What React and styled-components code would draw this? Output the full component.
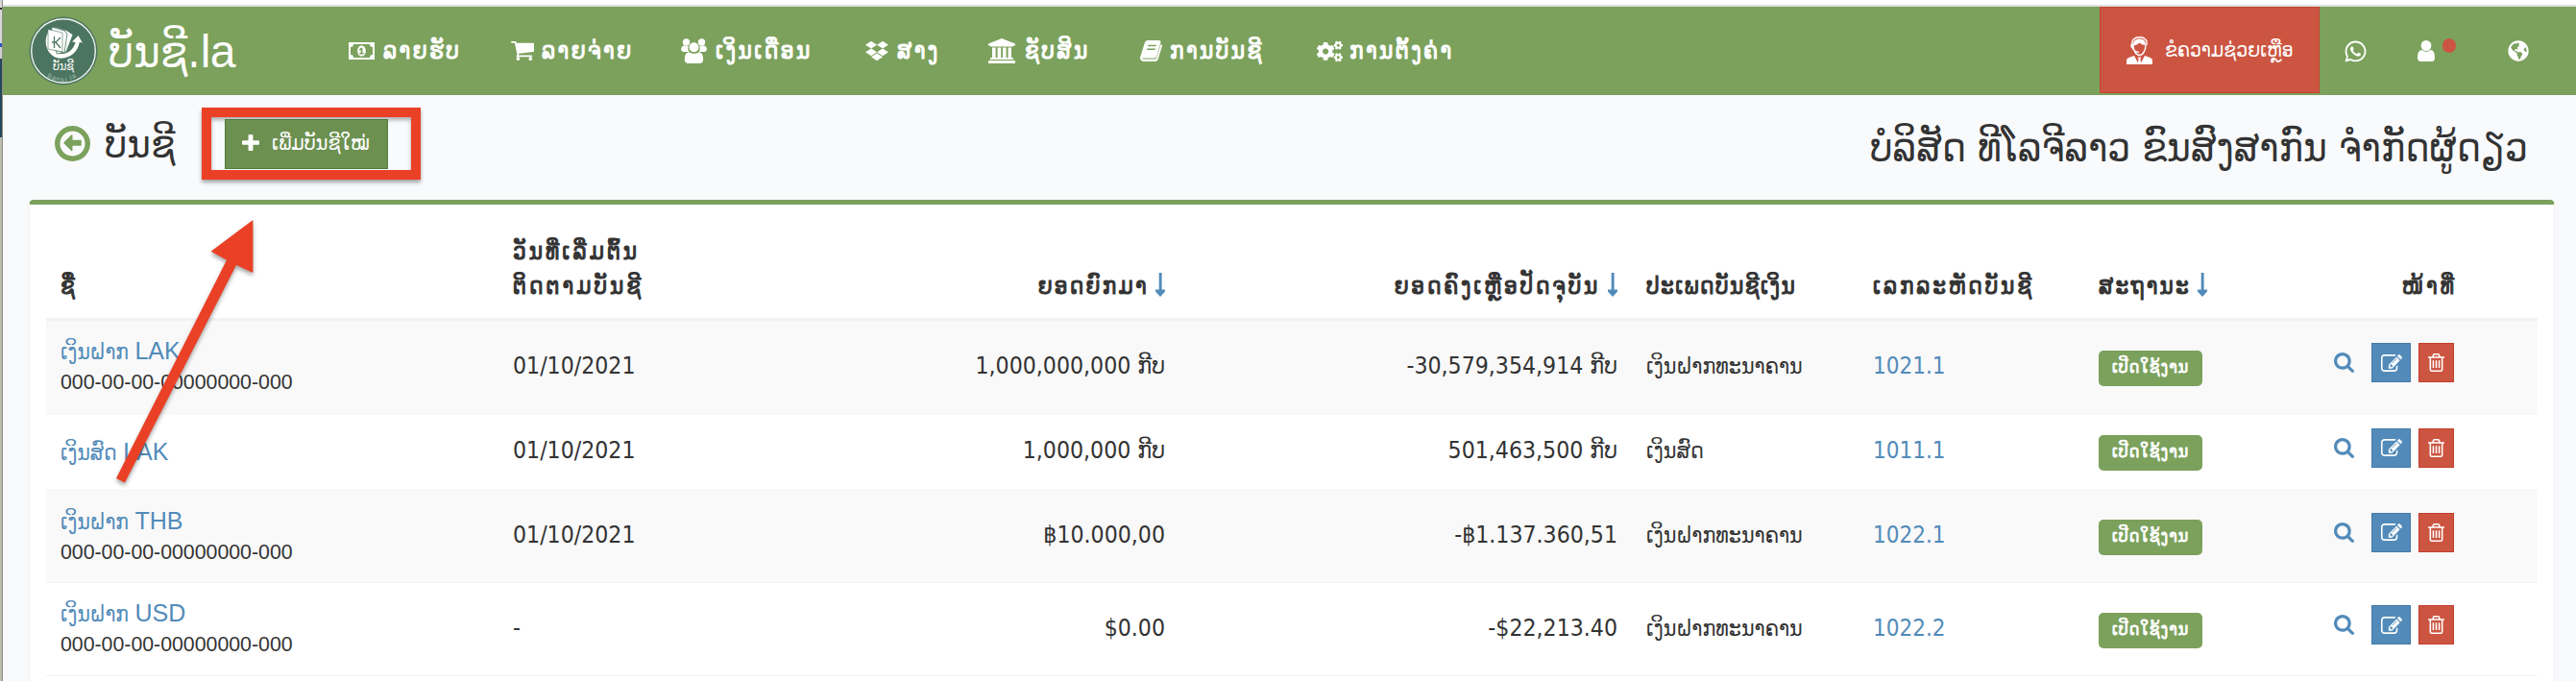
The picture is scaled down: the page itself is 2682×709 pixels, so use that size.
import React from 'react';
import styled, { createGlobalStyle } from 'styled-components';
import { FaDropbox, FaWhatsapp, FaGlobeAmericas, FaCogs } from 'react-icons/fa';

const Svg = ({ w, h, box = '0 0 1792 1792', children }) => (
  <svg width={w} height={h} viewBox={box} fill='currentColor' preserveAspectRatio='none'>
    {children}
  </svg>
);

const MoneyIcon = () => (
  <Svg w={27} h={18} box='0 0 27 18'>
    <path
      fillRule='evenodd'
      d='M0 0h27v18H0zM2 5v8a3 3 0 0 1 3 3h17a3 3 0 0 1 3-3V5a3 3 0 0 1-3-3H5a3 3 0 0 1-3 3zM13.500 3.400c2.900 0 4.300 2.700 4.300 5.600s-1.400 5.600-4.300 5.600-4.300-2.700-4.300-5.600 1.400-5.600 4.300-5.600zM12.800 5.800l-2 1.600.8 1 1-.7v3.400h-1.400v1.300h4.500v-1.300h-1.300V5.800z'
    />
  </Svg>
);

const CartIcon = () => (
  <Svg w={24} h={20} box='64 256 1664 1408'>
    <path d='M704 1536q0 52-38 90t-90 38-90-38-38-90 38-90 90-38 90 38 38 90zm896 0q0 52-38 90t-90 38-90-38-38-90 38-90 90-38 90 38 38 90zm128-1088v512q0 24-16.500 42.500t-40.500 21.500l-1044 122q13 60 13 70 0 16-24 64h920q26 0 45 19t19 45-19 45-45 19h-1024q-26 0-45-19t-19-45q0-11 8-31.500t16-36 21.500-40 15.500-29.500l-177-823h-204q-26 0-45-19t-19-45 19-45 45-19h256q16 0 28.500 6.500t19.500 15.500 13 24.500 8 26 5.500 29.500 4.500 26h1201q26 0 45 19t19 45z' />
  </Svg>
);

const UsersIcon = () => (
  <Svg w={27} h={26} box='0 0 27 26'>
    <circle cx='5.500' cy='4' r='3.700' />
    <circle cx='21.500' cy='4' r='3.700' />
    <path d='M3.500 7.500c1.500 1 3 1 4.300.3-1 2.500-.5 4.600.6 6.200H3C.8 14-.3 12.500.3 10.200.8 8.600 1.800 7.500 3.500 7.500zM23.500 7.500c-1.500 1-3 1-4.300.3 1 2.500.5 4.600-.6 6.200H24c2.200 0 3.300-1.500 2.700-3.800-.5-1.600-1.500-2.700-3.200-2.700z' />
    <circle cx='13.500' cy='9.200' r='5' />
    <path d='M8.500 14.200c3 2.200 7 2.200 10 0 3.500 0 4.700 4 4.700 7.800 0 2.500-1.600 4-3.800 4H7.600c-2.200 0-3.800-1.500-3.800-4 0-3.800 1.200-7.800 4.700-7.800z' />
  </Svg>
);

const BankIcon = () => (
  <Svg w={28} h={26} box='0 0 28 26'>
    <path d='M14 0l14 5.500v2h-2c0 .8-.5 1-1 1H3c-.5 0-1-.3-1-1H0v-2zM4 9.500h3.600v10.600h2V9.500h3.600v10.600h1.800V9.500h3.600v10.600h2V9.500H24v10.600h1c.6 0 1 .4 1 1v.9H2v-.9c0-.6.4-1 1-1h1zM1 23h26c.6 0 1 .4 1 1v2H0v-2c0-.6.400-1 1-1z' />
  </Svg>
);

const BookIcon = () => (
  <Svg w={23} h={22} box='0 0 23 22'>
    <path
      fillRule='evenodd'
      d='M8 0h11.500c1.700 0 2.300 1.200 1.900 2.600L17.300 16.500c-.5 1.500-1.300 2-2.800 2H3.300c-1.300 0-1.500 1 .1 1h12c.9 0 1.500-.4 1.800-1.200L21.600 4c1.100.4 1.500 1.200 1.200 2.300l-4 13.300C18.300 21.200 17 22 15.500 22H4c-2.600 0-4.600-2.400-3.800-4.800L4.500 3.400C5 1.500 6.200 0 8 0zM8.500 4.800L8 6.300h8.600l.5-1.500zM7.400 8.400l-.5 1.500h8.700l.4-1.500z'
    />
  </Svg>
);

const AgentIcon = () => (
  <Svg w={27} h={29} box='0 0 27 29'>
    <path
      fill='none'
      stroke='currentColor'
      strokeWidth='1.400'
      d='M6 9C5 4 8 .8 13.500.8S22 4 21 9M7 9c0 5 2.800 10.500 6.500 10.500S20 14 20 9M6 10.500c.5 3.500 3 5.500 7 6'
    />
    <path d='M7 8.500C7 4.500 9.500 2.500 13.500 2.500S20 4.500 20 9c-3-.2-5-1-6.500-2.500C12 8 10 9 7 9.500zM4.800 7.500h2v5c-1.500 0-2.400-1-2.400-2.500s.1-1.800.4-2.500zM0 29v-4c0-2.600 4-3.800 8-5l4 7.500.6-4.500-1-1.500h3.800l-1 1.500.6 4.500 4-7.500c4 1.200 8 2.400 8 5v4z' />
  </Svg>
);

const UserIcon = () => (
  <Svg w={18} h={22} box='256 128 1280 1536'>
    <path d='M1536 1399q0 109-62.500 187t-150.500 78h-854q-88 0-150.500-78t-62.500-187q0-85 8.500-160.500t31.500-152 58.500-131 94-89 134.500-34.500q131 128 313 128t313-128q76 0 134.500 34.500t94 89 58.500 131 31.500 152 8.500 160.500zm-256-887q0 159-112.500 271.500t-271.500 112.500-271.500-112.500-112.500-271.500 112.500-271.500 271.500-112.500 271.500 112.500 112.500 271.500z' />
  </Svg>
);

const BackIcon = () => (
  <Svg w={37} h={37} box='128 128 1536 1536'>
    <path d='M1280 832v128q0 14-9 23t-23 9h-352v192q0 14-9 23t-23 9q-12 0-24-10l-319-319q-9-9-9-23t9-23l320-320q9-9 23-9 13 0 22.500 9.500t9.500 22.500v192h352q13 0 22.500 9.500t9.500 22.500zm160 64q0-148-73-273t-198-198-273-73-273 73-198 198-73 273 73 273 198 198 273 73 273-73 198-198 73-273zm224 0q0 209-103 385.500t-279.500 279.500-385.500 103-385.500-103-279.500-279.500-103-385.500 103-385.500 279.500-279.500 385.500-103 385.500 103 279.500 279.500 103 385.500z' />
  </Svg>
);

const PlusIcon = () => (
  <Svg w={18} h={17} box='192 128 1408 1408'>
    <path d='M1600 736v192q0 40-28 68t-68 28h-416v416q0 40-28 68t-68 28h-192q-40 0-68-28t-28-68v-416h-416q-40 0-68-28t-28-68v-192q0-40 28-68t68-28h416v-416q0-40 28-68t68-28h192q40 0 68 28t28 68v416h416q40 0 68 28t28 68z' />
  </Svg>
);

const SortIcon = () => (
  <Svg w={10} h={25} box='0 0 10 25'>
    <path d='M3.700 0h2.900v17.500H10v2L5 25l-5-5.500v-2h3.700z' />
  </Svg>
);

const SearchIcon = () => (
  <Svg w={21} h={21} box='64 128 1664 1664'>
    <path d='M1216 832q0-185-131.500-316.500t-316.500-131.500-316.500 131.500-131.500 316.500 131.500 316.500 316.500 131.500 316.500-131.500 131.500-316.500zm512 832q0 52-38 90t-90 38q-54 0-90-38l-343-342q-179 124-399 124-143 0-273.500-55.500t-225-150-150-225-55.500-273.500 55.500-273.500 150-225 225-150 273.500-55.500 273.500 55.500 225 150 150 225 55.500 273.500q0 220-124 399l343 343q37 37 37 90z' />
  </Svg>
);

const EditIcon = () => (
  <Svg w={22} h={18} box='0 128 1792 1408'>
    <path d='M888 1184l116-116-152-152-116 116v56h96v96h56zm440-720q-16-16-33 1l-350 350q-17 17-1 33t33-1l350-350q17-17 1-33zm80 594v190q0 119-84.500 203.500t-203.500 84.500h-832q-119 0-203.500-84.500t-84.500-203.500v-832q0-119 84.500-203.500t203.500-84.500h832q63 0 117 25 15 7 18 23 3 17-9 29l-49 49q-14 14-32 8-23-6-45-6h-832q-66 0-113 47t-47 113v832q0 66 47 113t113 47h832q66 0 113-47t47-113v-126q0-13 9-22l64-64q15-15 35-7t20 29zm-96-738l288 288-672 672h-288v-288zm444 132l-92 92-288-288 92-92q28-28 68-28t68 28l152 152q28 28 28 68t-28 68z' />
  </Svg>
);

const TrashIcon = () => (
  <Svg w={17} h={19} box='192 128 1408 1536'>
    <path d='M704 736v576q0 14-9 23t-23 9h-64q-14 0-23-9t-9-23v-576q0-14 9-23t23-9h64q14 0 23 9t9 23zm256 0v576q0 14-9 23t-23 9h-64q-14 0-23-9t-9-23v-576q0-14 9-23t23-9h64q14 0 23 9t9 23zm256 0v576q0 14-9 23t-23 9h-64q-14 0-23-9t-9-23v-576q0-14 9-23t23-9h64q14 0 23 9t9 23zm128 724v-948h-896v948q0 22 7 40.500t14.500 27 10.500 8.500h832q3 0 10.500-8.500t14.500-27 7-40.500zm-672-1076h448l-48-117q-7-9-17-11h-317q-10 2-17 11zm928 32v64q0 14-9 23t-23 9h-96v948q0 83-47 143.500t-113 60.500h-832q-66 0-113-58.500t-47-141.500v-952h-96q-14 0-23-9t-9-23v-64q0-14 9-23t23-9h309l70-167q15-37 54-63t79-26h320q40 0 79 26t54 63l70 167h309q14 0 23 9t9 23z' />
  </Svg>
);

const Logo = () => (
  <svg width='72' height='72' viewBox='0 0 72 72'>
    <circle cx='36' cy='36' r='35.500' fill='#4b7560' />
    <circle cx='36' cy='36' r='33.300' fill='none' stroke='#eef3ee' strokeWidth='1.400' />
    {/* round arrow behind the notes */}
    <path
      d='M21 15C15 24 17 37 27 42.500 40 47 51 38 52.800 27l3 .6L51.500 20 45 26.500l3.600.5C46.500 35 39 41.500 29 38z'
      fill='#fff'
    />
    <path d='M27 11l13 4 6 4-7 18-10 2z' fill='#fff' stroke='#4b7560' strokeWidth='.8' />
    <path d='M24 11l13 4 3 3-3 20-14-4z' fill='#fff' stroke='#4b7560' strokeWidth='.8' />
    <path d='M20 13.500l15 3.500v20l-15-3z' fill='#fff' stroke='#4b7560' strokeWidth='.6' />
    <path d='M26.500 21v12M24 27h5M33 22l-5 5 5 6' fill='none' stroke='#4b7560' strokeWidth='1.300' />
    <text x='36' y='56' textAnchor='middle' fontFamily='"DejaVu Sans Condensed"' fontSize='12.500' fill='#fff'>
      ບັນຊີ
    </text>
    <text
      x='19 23.500 28 33 38 41 43.500 46'
      y='63 65.500 67 68 68 67.500 66.500 65'
      rotate='30 22 12 4 -4 -10 -18 -26'
      fontFamily='"Liberation Sans"'
      fontSize='7'
      fill='#a9c4b1'
    >
      bansi.la
    </text>
  </svg>
);

const menu = [
  { label: 'ລາຍຮັບ', icon: <MoneyIcon />, width: 169, gap: 9 },
  { label: 'ລາຍຈ່າຍ', icon: <CartIcon />, width: 177, gap: 8 },
  { label: 'ເງິນເດືອນ', icon: <UsersIcon />, width: 192, gap: 9 },
  { label: 'ສາງ', icon: <FaDropbox size={24} />, width: 128, gap: 9 },
  { label: 'ຊັບສິນ', icon: <BankIcon />, width: 158, gap: 10 },
  { label: 'ການບັນຊີ', icon: <BookIcon />, width: 184, gap: 8 },
  { label: 'ການຕັ້ງຄ່າ', icon: <FaCogs size={27} />, width: 180, gap: 7 },
];

const accounts = [
  {
    name: 'ເງິນຝາກ',
    currency: 'LAK',
    number: '000-00-00-00000000-000',
    date: '01/10/2021',
    opening: '1,000,000,000 ກີບ',
    balance: '-30,579,354,914 ກີບ',
    type: 'ເງິນຝາກທະນາຄານ',
    code: '1021.1',
  },
  {
    name: 'ເງິນສົດ',
    currency: 'LAK',
    date: '01/10/2021',
    opening: '1,000,000 ກີບ',
    balance: '501,463,500 ກີບ',
    type: 'ເງິນສົດ',
    code: '1011.1',
  },
  {
    name: 'ເງິນຝາກ',
    currency: 'THB',
    number: '000-00-00-00000000-000',
    date: '01/10/2021',
    opening: '฿10.000,00',
    balance: '-฿1.137.360,51',
    type: 'ເງິນຝາກທະນາຄານ',
    code: '1022.1',
  },
  {
    name: 'ເງິນຝາກ',
    currency: 'USD',
    number: '000-00-00-00000000-000',
    date: '-',
    opening: '$0.00',
    balance: '-$22,213.40',
    type: 'ເງິນຝາກທະນາຄານ',
    code: '1022.2',
  },
];

const App = () => {
  return (
    <Screen>
      <GlobalStyle />
      <Edge />
      <Page>
        <TopStrip />
        <Navbar>
          <Logo />
          <Brand>
            ບັນຊີ.<BrandSuffix>la</BrandSuffix>
          </Brand>
          <Menu>
            {menu.map((item) => (
              <MenuItem key={item.label} $width={item.width} $gap={item.gap}>
                {item.icon}
                <span>{item.label}</span>
              </MenuItem>
            ))}
          </Menu>
          <HelpButton>
            <AgentIcon />
            <span>ຂໍຄວາມຊ່ວຍເຫຼືອ</span>
          </HelpButton>
          <NavIcons>
            <FaWhatsapp size={25} />
            <UserBox>
              <UserIcon />
              <Dot />
            </UserBox>
            <FaGlobeAmericas size={22} />
          </NavIcons>
        </Navbar>
        <Heading>
          <Back>
            <BackIcon />
          </Back>
          <Title>ບັນຊີ</Title>
          <AddFrame>
            <AddButton>
              <PlusIcon />
              <span>ເພີ່ມບັນຊີໃໝ່</span>
            </AddButton>
          </AddFrame>
          <Company>ບໍລິສັດ ທີໂລຈີລາວ ຂົນສົງສາກົນ ຈຳກັດຜູ້ດຽວ</Company>
        </Heading>
        <Box>
          <HeadRow>
            <HeadCell>ຊື່</HeadCell>
            <HeadCell $spacing={3.1}>
              ວັນທີ່ເລີ່ມຕົ້ນ
              <br />
              ຕິດຕາມບັນຊີ
            </HeadCell>
            <HeadCell $right>
              ຍອດຍົກມາ <SortIcon />
            </HeadCell>
            <HeadCell $right $spacing={2.9}>
              ຍອດຄົງເຫຼືອປັດຈຸບັນ <SortIcon />
            </HeadCell>
            <HeadCell $spacing={1.5}>ປະເພດບັນຊີເງິນ</HeadCell>
            <HeadCell $spacing={2.9}>ເລກລະຫັດບັນຊີ</HeadCell>
            <HeadCell>
              ສະຖານະ <SortIcon />
            </HeadCell>
            <HeadCell $right $spacing={3.1}>
              ໜ້າທີ່
            </HeadCell>
          </HeadRow>
          {accounts.map((a, index) => (
            <Row key={index} $short={!a.number}>
              <Cell>
                <Name>
                  {a.name} <Currency>{a.currency}</Currency>
                </Name>
                {a.number && <Number>{a.number}</Number>}
              </Cell>
              <ValueCell>{a.date}</ValueCell>
              <ValueCell $right>{a.opening}</ValueCell>
              <ValueCell $right>{a.balance}</ValueCell>
              <TypeCell>{a.type}</TypeCell>
              <CodeCell>{a.code}</CodeCell>
              <Cell>
                <Status>ເປີດໃຊ້ງານ</Status>
              </Cell>
              <Actions>
                <SearchIcon />
                <ActionButton $color='#528bb9' $border='#437ba8' $width={41}>
                  <EditIcon />
                </ActionButton>
                <ActionButton $color='#cc5542' $border='#c43f2b' $width={37}>
                  <TrashIcon />
                </ActionButton>
              </Actions>
            </Row>
          ))}
        </Box>
      </Page>
      <Pointer width='160' height='300' viewBox='0 0 160 300'>
        <path d='M153.400 9l-43.800 32.700 16.400 9L11 278l9 4.500L136 56l17.400 8z' fill='#ea4126' />
      </Pointer>
    </Screen>
  );
};

export default App;

const GlobalStyle = createGlobalStyle`
  * {
    box-sizing: border-box;
  }
  body {
    margin: 0;
    overflow: hidden;
    background: #f9fafc;
    color: #333;
    font-family: 'DejaVu Sans Condensed', 'DejaVu Sans', 'Noto Sans Lao', sans-serif;
    font-size: 24px;
  }
  svg {
    display: block;
    flex: none;
  }
`;

const Screen = styled.div`
  position: relative;
  display: flex;
  height: 709px;
  overflow: hidden;
`;

const Edge = styled.div`
  width: 3px;
  flex: none;
  border-right: 1px solid #8d8e86;
  background: linear-gradient(
    #d8d8d8 0 8px,
    #333 8px 10px,
    #d8d8d8 10px 45px,
    #2656b8 45px 49px,
    #d0d0d0 49px 61px,
    #24465a 61px 143px,
    #bdbcb1 143px
  );
`;

const Page = styled.div`
  flex: 1;
  min-width: 0;
`;

const TopStrip = styled.div`
  height: 7px;
  background: #fff;
  border-bottom: 2px solid #dcdedd;
`;

const Navbar = styled.div`
  display: flex;
  align-items: center;
  height: 92px;
  padding-left: 27px;
  background: #7ba15c;
  color: #fff;
`;

const Brand = styled.div`
  width: 250px;
  margin-left: 11px;
  padding-top: 2px;
  font-size: 46.500px;
  line-height: 88px;
  white-space: nowrap;
`;

const BrandSuffix = styled.span`
  font-family: 'Liberation Sans', sans-serif;
  font-size: 48px;
  letter-spacing: -0.5px;
`;

const Menu = styled.div`
  display: flex;
  flex: 1;
`;

const MenuItem = styled.div`
  display: flex;
  align-items: center;
  gap: ${(p) => p.$gap}px;
  width: ${(p) => p.$width}px;
  white-space: nowrap;
  font-size: 24px;
  letter-spacing: 2.5px;
  -webkit-text-stroke: 1px currentColor;
`;

const HelpButton = styled.div`
  display: flex;
  align-items: center;
  gap: 13px;
  align-self: flex-start;
  width: 229px;
  height: 90px;
  padding-left: 27px;
  background: #cc5542;
  border: 1px solid #c6432f;
  font-size: 21px;
  white-space: nowrap;
`;

const NavIcons = styled.div`
  display: flex;
  align-items: center;
  width: 267px;
  padding-left: 25px;
`;

const UserBox = styled.div`
  position: relative;
  margin: 0 76px 0 52px;
`;

const Dot = styled.div`
  position: absolute;
  left: 26px;
  top: -2px;
  width: 14px;
  height: 15px;
  border-radius: 7px;
  background: #cc5542;
`;

const Heading = styled.div`
  display: flex;
  align-items: flex-start;
  height: 109px;
  padding: 13px 50px 0 54px;
`;

const Back = styled.div`
  margin-top: 19px;
  color: #7ba15c;
`;

const Title = styled.div`
  width: 101px;
  margin-left: 15px;
  padding-top: 3px;
  font-size: 41.500px;
  line-height: 70px;
`;

const AddFrame = styled.div`
  display: flex;
  width: 228px;
  height: 75px;
  padding: 2px 14px 0;
  border: 10px solid #ea4126;
  box-shadow: 0 3px 4px rgba(0, 0, 0, 0.35), inset 0 3px 4px rgba(0, 0, 0, 0.3);
`;

const AddButton = styled.div`
  display: flex;
  align-items: center;
  gap: 13px;
  width: 170px;
  height: 52px;
  padding: 0 0 4px 17px;
  background: #6c9050;
  border: 1px solid #4f7c3a;
  color: #fff;
  font-size: 21.300px;
  white-space: nowrap;
`;

const Company = styled.div`
  margin-left: auto;
  padding-top: 5px;
  font-size: 42px;
  line-height: 74px;
  white-space: nowrap;
`;

const Box = styled.div`
  width: 2630px;
  height: 520px;
  margin-left: 27px;
  padding: 0 17px;
  background: #fff;
  border: 1px solid #f0f1f3;
  border-top: 5px solid #7ba15c;
  border-radius: 5px 5px 0 0;
`;

const Row = styled.div`
  display: grid;
  grid-template-columns: 471px 238px 471px 471px 236px 235px 236px 236px;
  align-items: center;
  height: ${(p) => (p.$short ? 80 : 96.5)}px;
  border-bottom: 1px solid #f2f2f2;
  &:nth-child(even) {
    background: #f9f9f9;
  }
`;

const HeadRow = styled(Row)`
  align-items: end;
  height: 121px;
  padding-bottom: 15px;
  border-bottom: 3px solid #f2f2f2;
  svg {
    display: inline-block;
    margin-left: -2px;
    color: #528bb9;
    vertical-align: -3px;
  }
  > :last-child {
    padding-right: 84px;
  }
`;

const Cell = styled.div`
  padding: 0 15px;
  line-height: 36px;
  white-space: nowrap;
  text-align: ${(p) => (p.$right ? 'right' : 'left')};
`;

const HeadCell = styled(Cell)`
  font-size: 24px;
  letter-spacing: ${(p) => p.$spacing || 2.3}px;
  -webkit-text-stroke: 1px currentColor;
`;

const ValueCell = styled(Cell)`
  padding-bottom: 2px;
  font-size: 24.600px;
`;

const TypeCell = styled(Cell)`
  padding-bottom: 2px;
  font-size: 23px;
`;

const CodeCell = styled(Cell)`
  padding-bottom: 2px;
  color: #528bb9;
`;

const Name = styled.div`
  font-size: 22.600px;
  line-height: 32px;
  color: #528bb9;
`;

const Currency = styled.span`
  font-family: 'Liberation Sans', sans-serif;
  font-size: 25px;
`;

const Number = styled.div`
  padding-top: 1px;
  font-family: 'Liberation Sans', sans-serif;
  font-size: 21.300px;
  line-height: 31px;
`;

const Status = styled.span`
  display: inline-block;
  width: 108px;
  height: 37px;
  border-radius: 5px;
  background: #7ba15c;
  color: #fff;
  font-size: 17.500px;
  line-height: 35px;
  letter-spacing: 1px;
  text-align: center;
  -webkit-text-stroke: 0.8px currentColor;
`;

const Actions = styled.div`
  display: flex;
  align-items: center;
  justify-content: flex-end;
  gap: 8px;
  padding: 0 87px 8px 0;
  color: #528bb9;
  > svg {
    margin-right: 10px;
  }
`;

const ActionButton = styled.div`
  display: flex;
  align-items: center;
  justify-content: center;
  width: ${(p) => p.$width}px;
  height: 41px;
  background: ${(p) => p.$color};
  border: 1px solid ${(p) => p.$border};
  color: #fff;
`;

const Pointer = styled.svg`
  position: absolute;
  left: 110px;
  top: 220px;
  filter: drop-shadow(0 3px 2px rgba(0, 0, 0, 0.35));
`;
